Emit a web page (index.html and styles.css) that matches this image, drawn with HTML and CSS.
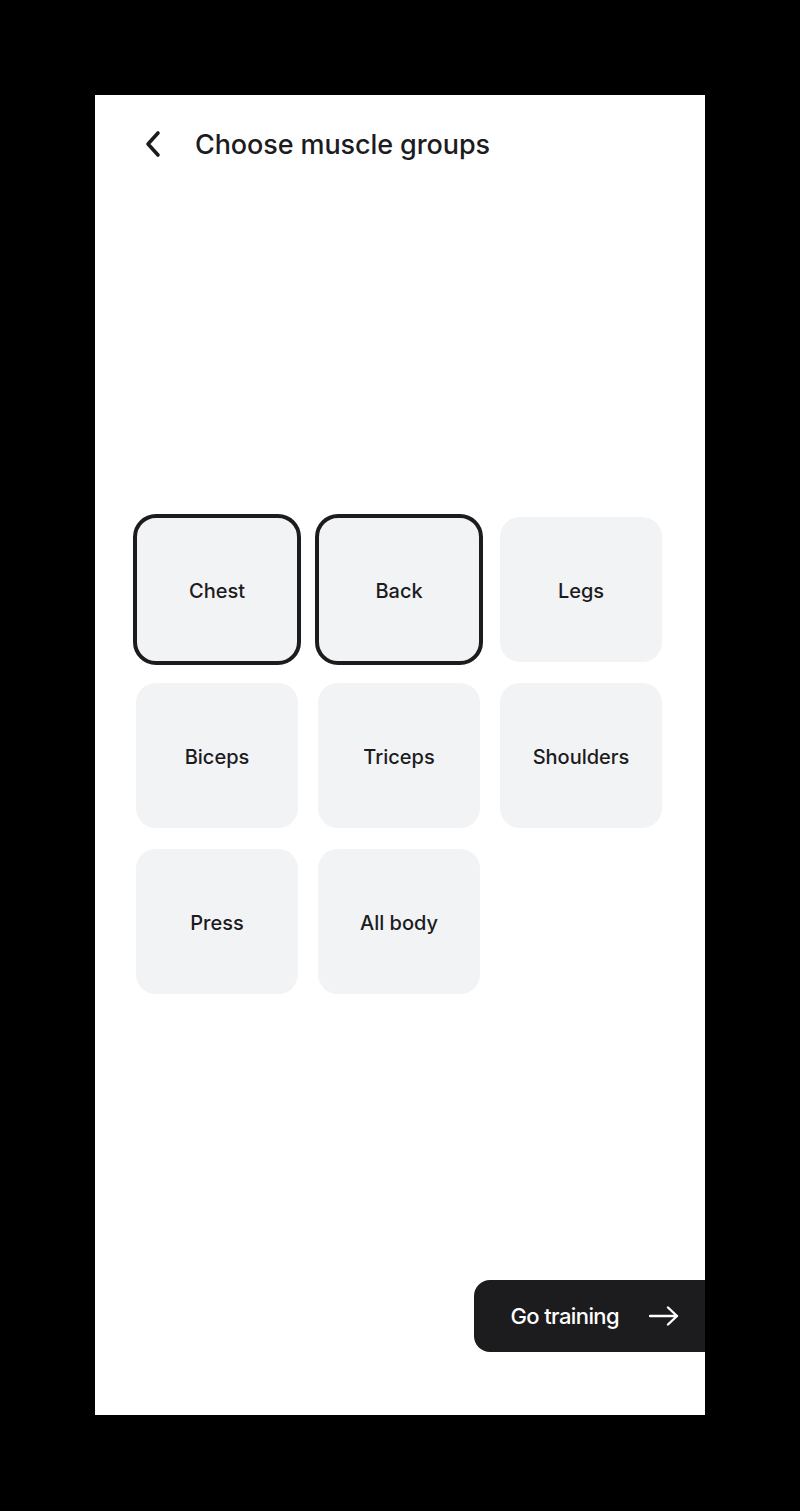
FILE: index.html
```html
<!DOCTYPE html>
<html lang="en">

<head>
    <meta charset="UTF-8">
    <meta name="viewport" content="width=device-width, initial-scale=1.0">
    <title>Choose muscle groups</title>
    <link rel="stylesheet" href="styles.css">
</head>

<body>
    <div class="screen">
        <div class="header">
            <button class="back" type="button" aria-label="Back">
                <svg width="20" height="28" viewBox="0 0 20 28">
                    <path d="M15 3 L5 14 L15 25" fill="none" stroke="#1c1c1e" stroke-width="3.6"
                        stroke-linecap="round" stroke-linejoin="round" />
                </svg>
            </button>
            <h1>Choose muscle groups</h1>
        </div>

        <div class="groups">
            <div class="tile selected">Chest</div>
            <div class="tile selected">Back</div>
            <div class="tile">Legs</div>
            <div class="tile">Biceps</div>
            <div class="tile">Triceps</div>
            <div class="tile">Shoulders</div>
            <div class="tile">Press</div>
            <div class="tile">All body</div>
        </div>

        <button class="go" type="button">
            <span>Go training</span>
            <svg width="30" height="20" viewBox="0 0 30 20">
                <path d="M1 10 H28 M19 1.5 L28 10 L19 18.5" fill="none" stroke="#fff" stroke-width="2.4"
                    stroke-linecap="round" stroke-linejoin="round" />
            </svg>
        </button>
    </div>
</body>

</html>
```

FILE: styles.css
```css
body {
    background-color: #000;
    margin: 0;
    font-family: 'Inter', 'Noto Sans', sans-serif;
}

.screen {
    margin: 95px 0 0 95px;
    width: 610px;
    height: 1320px;
    background-color: #fff;
    overflow: hidden;
    display: flex;
    flex-direction: column;
    padding-top: 29px;
    box-sizing: border-box;
}

.header {
    display: flex;
    align-items: center;
    height: 40px;
    padding-left: 48px;
    gap: 32px;
}

.back {
    background: none;
    border: none;
    padding: 0;
    display: flex;
    cursor: pointer;
}

h1 {
    margin: 0;
    font-size: 27px;
    font-weight: 500;
    color: #1c1c1e;
    letter-spacing: -0.1px;
}

.groups {
    margin: 353px 0 0 41px;
    display: grid;
    grid-template-columns: repeat(3, 162px);
    grid-auto-rows: 145px;
    column-gap: 20px;
    row-gap: 21px;
}

.tile {
    background-color: #f2f3f5;
    border-radius: 20px;
    display: flex;
    align-items: center;
    justify-content: center;
    padding-top: 2px;
    font-size: 20px;
    font-weight: 500;
    color: #1c1c1e;
    cursor: pointer;
}

.selected {
    outline: 4px solid #1c1c1e;
    outline-offset: -1px;
}

.go {
    margin: auto -20px 63px 0;
    align-self: flex-end;
    height: 72px;
    padding: 0 46px 0 36px;
    border: none;
    border-radius: 16px;
    background-color: #1c1c1e;
    color: #fff;
    display: flex;
    align-items: center;
    gap: 30px;
    font-family: 'Inter', 'Noto Sans', sans-serif;
    font-size: 22px;
    font-weight: 500;
    letter-spacing: -0.6px;
    cursor: pointer;
}
```
